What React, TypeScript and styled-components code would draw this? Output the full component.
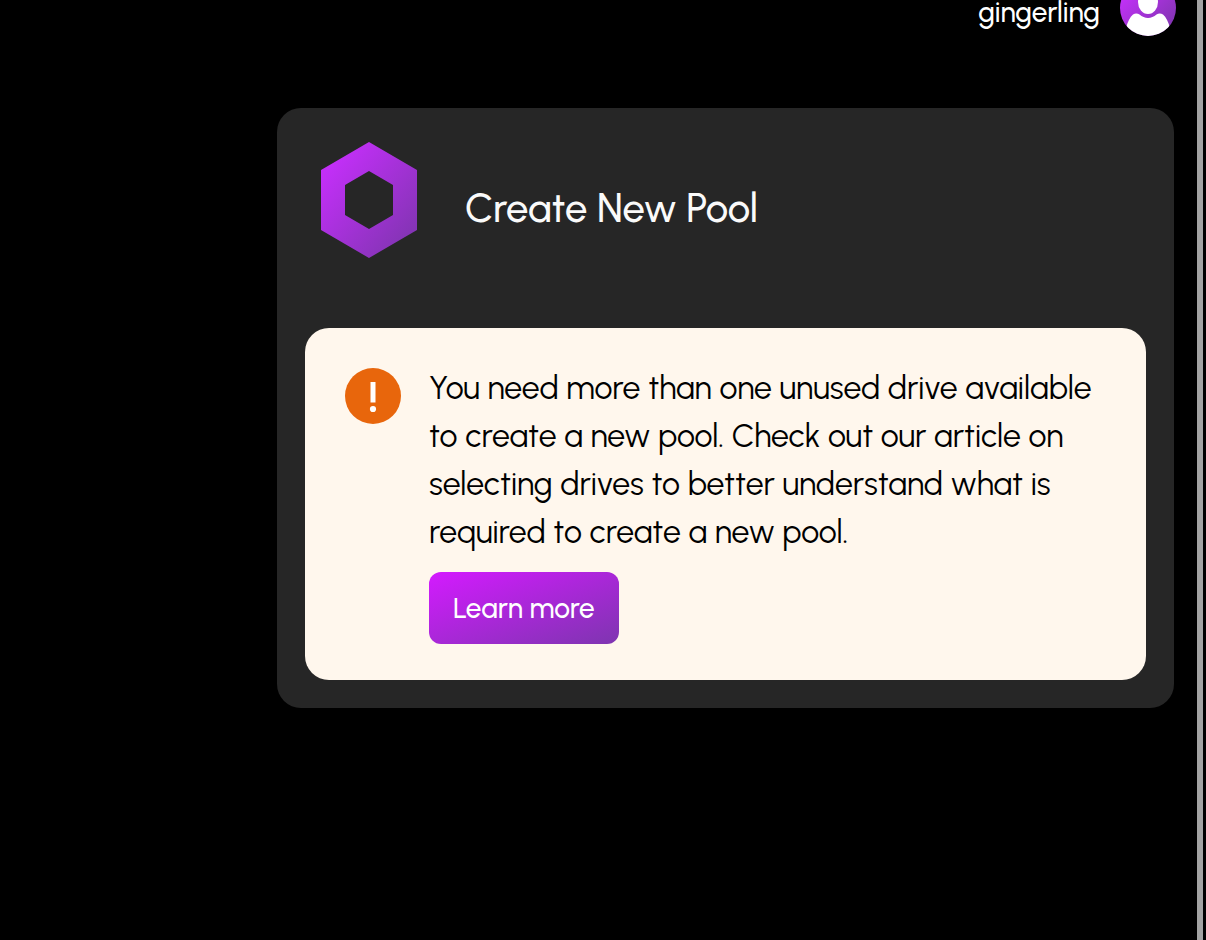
import React from "react";
import styled, { createGlobalStyle } from "styled-components";

const GlobalStyle = createGlobalStyle`
  * { box-sizing: border-box; }
  body {
    margin: 0;
    background: #000;
    color: #fff;
    font-family: Urbanist, Lato, "Liberation Sans", sans-serif;
    font-weight: 400;
  }
`;

const Page = styled.div`
  display: flex;
  min-height: 100vh;
`;

const Content = styled.div`
  flex: 1;
  min-width: 0;
  padding-right: 23px;
`;

const ScrollTrack = styled.div`
  flex: none;
  width: 6px;
  margin-right: 3px;
  background: #a3a3a3;
`;

const TopBar = styled.header`
  display: flex;
  justify-content: flex-end;
  align-items: flex-end;
  gap: 20px;
  height: 36px;
  margin-right: -2px;
`;

const UserName = styled.div`
  padding-bottom: 12px;
  font-size: 28px;
  font-weight: 500;
  line-height: 24px;
`;

const Avatar = styled.svg`
  flex: none;
  width: 56px;
  height: 56px;
`;

const Card = styled.main`
  margin: 72px 0 32px 277px;
  padding: 28px;
  border-radius: 24px;
  background: #262626;
`;

const CardHeader = styled.div`
  display: flex;
  align-items: center;
  gap: 48px;
  padding: 6px 16px 70px;
`;

const PoolIcon = styled.svg`
  flex: none;
  width: 96px;
  height: 116px;
`;

const Title = styled.h1`
  margin: 0;
  padding-top: 16px;
  font-size: 40px;
  font-weight: 500;
  line-height: 48px;
  color: #fafafa;
`;

const Alert = styled.section`
  display: flex;
  align-items: flex-start;
  gap: 28px;
  padding: 36px 40px;
  border-radius: 24px;
  background: #fff7ed;
  color: #000;
`;

const AlertIcon = styled.svg`
  flex: none;
  width: 56px;
  height: 56px;
  margin-top: 4px;
`;

const AlertBody = styled.div`
  flex: 1;
  min-width: 0;
`;

const Message = styled.p`
  margin: 0 0 16px;
  font-size: 32px;
  line-height: 48px;
`;

const Button = styled.button`
  display: block;
  padding: 16px 24px;
  border: 0;
  border-radius: 12px;
  background: linear-gradient(to bottom right, #d41aff, #7e35b0);
  color: #fff;
  font: inherit;
  font-size: 28px;
  font-weight: 500;
  line-height: 40px;
`;

export default function App() {
  return (
    <Page>
      <GlobalStyle />
      <Content>
        <TopBar>
          <UserName>gingerling</UserName>
          <Avatar viewBox="0 0 56 56" aria-hidden="true">
            <defs>
              <linearGradient id="avatarFill" x1="0" y1="0" x2="1" y2="1">
                <stop offset="0.1" stopColor="#c930ff" />
                <stop offset="0.9" stopColor="#8035b0" />
              </linearGradient>
              <clipPath id="avatarClip">
                <circle cx="28" cy="28" r="28" />
              </clipPath>
            </defs>
            <circle cx="28" cy="28" r="28" fill="url(#avatarFill)" />
            <g fill="#fff" clipPath="url(#avatarClip)">
              <ellipse cx="28" cy="22" rx="10" ry="12" />
              <path d="M6 48C7.5 42 10 37 13 34.5C15 33 17.5 33 19.5 34.5C22 36.7 25 38 28 38C31 38 34 36.7 36.5 34.5C38.5 33 41 33 43 34.5C46 37 48.5 42 50 48V57H6Z" />
            </g>
          </Avatar>
        </TopBar>
        <Card>
          <CardHeader>
            <PoolIcon viewBox="0 0 96 116" aria-hidden="true">
              <defs>
                <linearGradient id="poolFill" gradientUnits="userSpaceOnUse" x1="8" y1="26" x2="88" y2="94">
                  <stop offset="0" stopColor="#c22ff7" />
                  <stop offset="1" stopColor="#8534b6" />
                </linearGradient>
              </defs>
              <path
                fill="url(#poolFill)"
                fillRule="evenodd"
                d="M48 0L96 28V88L48 116L0 88V28ZM48 29L24 43V73L48 87L72 73V43Z"
              />
            </PoolIcon>
            <Title>Create New Pool</Title>
          </CardHeader>
          <Alert>
            <AlertIcon viewBox="0 0 56 56" aria-hidden="true">
              <circle cx="28" cy="28" r="28" fill="#e8660c" />
              <path d="M25.5 14H30.5V34.5H25.5Z" fill="#fff" />
              <circle cx="28" cy="41" r="3.1" fill="#fff" />
            </AlertIcon>
            <AlertBody>
              <Message>
                You need more than one unused drive available to create a new pool. Check out our
                article on selecting drives to better understand what is required to create a new
                pool.
              </Message>
              <Button type="button">Learn more</Button>
            </AlertBody>
          </Alert>
        </Card>
      </Content>
      <ScrollTrack />
    </Page>
  );
}
